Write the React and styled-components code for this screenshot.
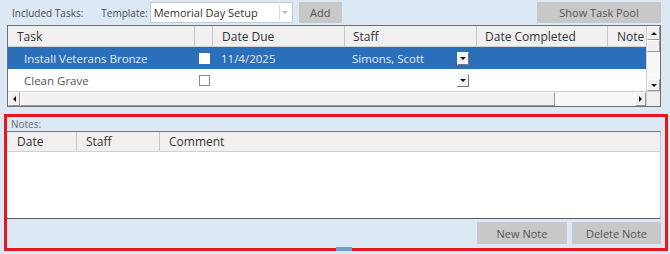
import React from 'react';
import styled, { createGlobalStyle } from 'styled-components';

const GlobalStyle = createGlobalStyle`
  body {
    margin: 0;
    font-family: "Open Sans", "DejaVu Sans", sans-serif;
  }
`;

const Page = styled.div`
  position: relative;
  width: 670px;
  height: 254px;
  overflow: hidden;
  background-color: #dce9f5;
  box-sizing: border-box;
`;

const TopBar = styled.div`
  height: 25px;
  display: flex;
  align-items: center;
  padding: 0 9px 0 12px;
`;

const Label = styled.span`
  font-size: 10px;
  color: #4a4a4a;
  margin-left: ${p => p.gap || 0}px;
  margin-right: 2px;
`;

const Combo = styled.div`
  width: 143px;
  height: 21px;
  box-sizing: border-box;
  background: #fff;
  border: 1px solid #c9c9c9;
  display: flex;
  align-items: center;
`;

const ComboText = styled.span`
  flex: 1;
  padding-left: 3px;
  font-size: 11px;
  color: #333;
`;

const ComboArrow = styled.span`
  width: 11px;
  height: 15px;
  border-left: 1px solid #d8d8d8;
  display: flex;
  align-items: center;
  justify-content: center;
  margin-right: 1px;

  &::after {
    content: '';
    border-left: 3px solid transparent;
    border-right: 3px solid transparent;
    border-top: 3px solid #b8b8b8;
  }
`;

const Button = styled.button`
  width: ${p => p.w}px;
  height: ${p => p.h || 21}px;
  margin-left: ${p => p.gap || 0}px;
  padding: 0;
  border: 0;
  background: #c8c8c8;
  color: #555;
  font-family: inherit;
  font-size: 11px;
`;

const Spacer = styled.div`
  flex: 1;
`;

const TaskGrid = styled.div`
  margin-left: 7px;
  width: 654px;
  height: 82px;
  box-sizing: border-box;
  border: 1px solid #6e6e6e;
  display: grid;
  grid-template-columns: 1fr 14px;
  grid-template-rows: 65px 15px;
  background: #fff;
`;

const Table = styled.div`
  overflow: hidden;
`;

const Row = styled.div`
  display: grid;
  grid-template-columns: 187px 18px 132px 132px 131px 60px;
  height: ${p => p.h}px;
  background: ${p => (p.head ? '#f0f0f0' : p.selected ? '#2b6fbb' : '#fff')};
  color: ${p => (p.head ? '#333' : p.selected ? '#e3ebf6' : '#555')};
  border-bottom: ${p => (p.head ? '1px solid #d4d4d4' : '0')};
  box-sizing: border-box;
  font-size: ${p => (p.head ? 12 : 11.5)}px;
`;

const Cell = styled.div`
  display: flex;
  align-items: center;
  justify-content: ${p => (p.spread ? 'space-between' : 'flex-start')};
  padding-left: ${p => p.pad || 0}px;
  padding-right: ${p => p.padRight || 0}px;
  border-right: ${p => (p.divider ? '1px solid #c8c8c8' : '0')};
  white-space: nowrap;
  overflow: hidden;
`;

const Check = styled.span`
  width: 11px;
  height: 11px;
  box-sizing: border-box;
  background: #fff;
  border: 1px solid ${p => (p.selected ? '#fff' : '#8a8a8a')};
`;

const DropButton = styled.span`
  width: 12px;
  height: 13px;
  box-sizing: border-box;
  background: #f4f4f4;
  border: 1px solid #fff;
  border-right-color: #777;
  border-bottom-color: #777;
  display: flex;
  align-items: center;
  justify-content: center;

  &::after {
    content: '';
    border-left: 3px solid transparent;
    border-right: 3px solid transparent;
    border-top: 3px solid #111;
  }
`;

const VScroll = styled.div`
  display: flex;
  flex-direction: column;
  background: #f4f4f4;
  border-left: 1px solid #d0d0d0;
`;

const ScrollButton = styled.div`
  width: ${p => p.w || 'auto'};
  height: ${p => p.h || 'auto'};
  box-sizing: border-box;
  background: #f0f0f0;
  border: 1px solid #fff;
  border-right-color: #9a9a9a;
  border-bottom-color: #9a9a9a;
  display: flex;
  align-items: center;
  justify-content: center;
  flex: none;
`;

const Arrow = styled.span`
  width: 0;
  height: 0;
  ${p =>
    p.dir === 'up'
      ? 'border-left: 3px solid transparent; border-right: 3px solid transparent; border-bottom: 3px solid #111;'
      : p.dir === 'down'
      ? 'border-left: 3px solid transparent; border-right: 3px solid transparent; border-top: 3px solid #111;'
      : p.dir === 'left'
      ? 'border-top: 3px solid transparent; border-bottom: 3px solid transparent; border-right: 3px solid #111;'
      : 'border-top: 3px solid transparent; border-bottom: 3px solid transparent; border-left: 3px solid #111;'}
`;

const Track = styled.div`
  flex: 1;
  background: #f7f7f7;
`;

const HScroll = styled.div`
  display: flex;
  border-top: 1px solid #d0d0d0;
  background: #f7f7f7;
`;

const Corner = styled.div`
  background: #f0f0f0;
  border-top: 1px solid #d0d0d0;
  border-left: 1px solid #d0d0d0;
`;

const NotesPanel = styled.div`
  margin: 7px 2px 0 4px;
  height: 137px;
  box-sizing: border-box;
  border: 3px solid #e8161e;
  display: flex;
  flex-direction: column;
`;

const NotesLabel = styled.div`
  height: 14px;
  padding-left: 4px;
  font-size: 10px;
  line-height: 14px;
  color: #6a6a6a;
`;

const NotesGrid = styled.div`
  width: 654px;
  height: 88px;
  box-sizing: border-box;
  border-top: 1px solid #7a7a7a;
  border-right: 1px solid #c8c8c8;
  border-bottom: 1px solid #5e5e5e;
  background: #fff;
  display: flex;
  flex-direction: column;
`;

const NotesHead = styled.div`
  height: 19px;
  display: grid;
  grid-template-columns: 70px 83px 1fr;
  background: #f0f0f0;
  border-bottom: 1px solid #d0d0d0;
  color: #333;
  font-size: 12px;
`;

const NotesFooter = styled.div`
  flex: 1;
  display: flex;
  justify-content: flex-end;
  align-items: flex-start;
  gap: 5px;
  padding: 3px 4px 0 0;
`;

const Grip = styled.div`
  position: absolute;
  left: 336px;
  top: 247px;
  width: 16px;
  height: 4px;
  background: #6f9fd2;
`;

const tasks = [
  { name: 'Install Veterans Bronze', due: '11/4/2025', staff: 'Simons, Scott', selected: true },
  { name: 'Clean Grave', due: '', staff: '', selected: false },
];

const App = () => (
  <Page>
    <GlobalStyle />
    <TopBar>
      <Label>Included Tasks:</Label>
      <Label gap={16}>Template:</Label>
      <Combo>
        <ComboText>Memorial Day Setup</ComboText>
        <ComboArrow />
      </Combo>
      <Button w={43} gap={6}>Add</Button>
      <Spacer />
      <Button w={124}>Show Task Pool</Button>
    </TopBar>

    <TaskGrid>
      <Table>
        <Row head h={21}>
          <Cell pad={9} divider>Task</Cell>
          <Cell divider />
          <Cell pad={9} divider>Date Due</Cell>
          <Cell pad={8} divider>Staff</Cell>
          <Cell pad={8} divider>Date Completed</Cell>
          <Cell pad={9}>Note</Cell>
        </Row>
        {tasks.map(task => (
          <Row key={task.name} h={22} selected={task.selected}>
            <Cell pad={16}>{task.name}</Cell>
            <Cell pad={4}>
              <Check selected={task.selected} />
            </Cell>
            <Cell pad={8}>{task.due}</Cell>
            <Cell pad={7} padRight={8} spread>
              <span>{task.staff}</span>
              <DropButton />
            </Cell>
            <Cell />
            <Cell />
          </Row>
        ))}
      </Table>

      <VScroll>
        <ScrollButton h="14px">
          <Arrow dir="up" />
        </ScrollButton>
        <ScrollButton h="12px" />
        <Track />
        <ScrollButton h="12px">
          <Arrow dir="down" />
        </ScrollButton>
      </VScroll>

      <HScroll>
        <ScrollButton w="12px">
          <Arrow dir="left" />
        </ScrollButton>
        <ScrollButton w="535px" />
        <Track />
        <ScrollButton w="11px">
          <Arrow dir="right" />
        </ScrollButton>
      </HScroll>
      <Corner />
    </TaskGrid>

    <NotesPanel>
      <NotesLabel>Notes:</NotesLabel>
      <NotesGrid>
        <NotesHead>
          <Cell pad={10} divider>Date</Cell>
          <Cell pad={9} divider>Staff</Cell>
          <Cell pad={9}>Comment</Cell>
        </NotesHead>
      </NotesGrid>
      <NotesFooter>
        <Button w={90} h={22}>New Note</Button>
        <Button w={89} h={22}>Delete Note</Button>
      </NotesFooter>
    </NotesPanel>
    <Grip />
  </Page>
);

export default App;
